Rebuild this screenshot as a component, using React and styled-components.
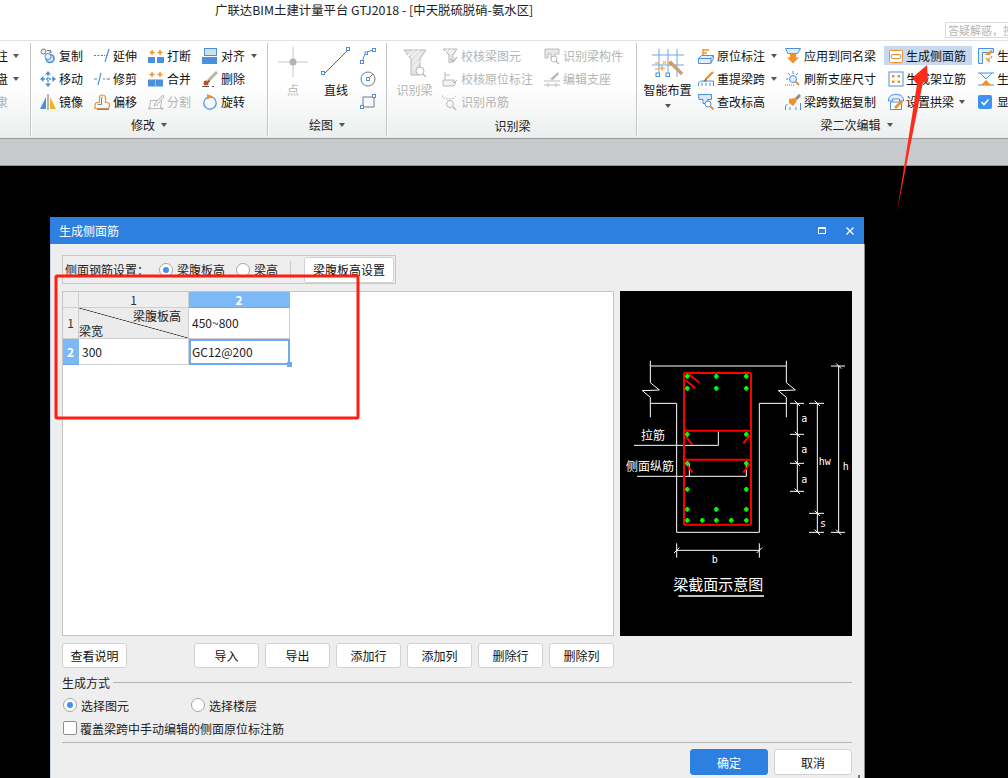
import React from 'react';
import styled, { createGlobalStyle } from 'styled-components';

const BLUE = '#4a90dc';
const ORANGE = '#f0912a';
const GREY = '#b9b9b9';
const DARK = '#6f7b85';

const GlobalStyle = createGlobalStyle`
  html, body {
    margin: 0;
    padding: 0;
    background: #000;
  }
  body {
    font-family: "Noto Sans CJK SC", "Noto Sans", sans-serif;
    font-size: 12px;
    color: #000;
  }
`;

const Page = styled.div`
  width: 1008px;
  height: 778px;
  position: relative;
  overflow: hidden;
  display: flex;
  flex-direction: column;
`;

const TitleBar = styled.div`
  height: 40px;
  flex: none;
  background: #fff;
  border-bottom: 1px solid #e2e2e2;
  display: flex;
  padding-left: 215px;
`;

const TitleText = styled.div`
  font-size: 12.4px;
  line-height: 20px;
  color: #222;
  white-space: nowrap;
`;

const SearchBox = styled.div`
  margin-left: auto;
  margin-top: 22px;
  width: 63px;
  height: 16px;
  box-sizing: border-box;
  border: 1px solid #dcdcdc;
  border-right: 0;
  font-size: 11px;
  line-height: 14px;
  color: #b4b4b4;
  padding-left: 2px;
  overflow: hidden;
  white-space: nowrap;
`;

const Ribbon = styled.div`
  height: 97px;
  flex: none;
  display: flex;
  background: linear-gradient(to bottom, #fff 0%, #fff 45%, #eceeee 100%);
  border-bottom: 1px solid #9a9c9d;
  overflow: hidden;
`;

const Group = styled.div`
  flex: none;
  width: ${(p) => p.$width}px;
  box-sizing: border-box;
  display: flex;
  flex-direction: column;
  margin: 2px 0;
  border-right: ${(p) => (p.$last ? '0' : '1px solid #c3c5c6')};
  box-shadow: ${(p) => (p.$last ? 'none' : '1px 0 0 #fff')};
  overflow: hidden;
`;

const GroupBody = styled.div`
  display: flex;
  justify-content: ${(p) => (p.$end ? 'flex-end' : 'flex-start')};
  padding-top: 1px;
  padding-left: ${(p) => p.$pad || 0}px;
`;

const GroupLabel = styled.div`
  margin-top: auto;
  margin-bottom: ${(p) => p.$bottom ?? 3}px;
  height: 16px;
  line-height: 16px;
  display: flex;
  justify-content: center;
  align-items: center;
  gap: 6px;
  color: #222;
  padding-left: ${(p) => p.$shift || 0}px;
  white-space: nowrap;
`;

const Column = styled.div`
  flex: none;
  width: ${(p) => (p.$width ? `${p.$width}px` : 'auto')};
  display: flex;
  flex-direction: column;
  margin-left: ${(p) => p.$left || 0}px;
`;

const Tool = styled.div`
  height: 19px;
  margin: 2px 0;
  display: flex;
  align-items: center;
  gap: ${(p) => p.$gap ?? 3}px;
  padding-left: ${(p) => p.$inset || 0}px;
  margin-right: ${(p) => p.$trim || 0}px;
  white-space: nowrap;
  color: ${(p) => (p.$off ? '#b4b4b4' : '#111')};
  background: ${(p) => (p.$active ? '#c7d9f1' : 'transparent')};
`;

const BigTool = styled.div`
  flex: none;
  width: ${(p) => p.$width}px;
  display: flex;
  flex-direction: column;
  align-items: center;
  color: ${(p) => (p.$off ? '#b4b4b4' : '#111')};
  white-space: nowrap;
`;

const BigIcon = styled.div`
  height: 38px;
  padding-top: ${(p) => p.$top ?? 3}px;
  box-sizing: border-box;
  display: flex;
  align-items: flex-start;
  justify-content: center;
`;

const BigText = styled.div`
  line-height: 16px;
  height: 16px;
`;

const Caret = styled.span`
  display: inline-block;
  flex: none;
  width: 0;
  height: 0;
  border-left: 3.5px solid transparent;
  border-right: 3.5px solid transparent;
  border-top: 4px solid #555;
  margin-left: ${(p) => p.$left || 0}px;
`;

const BigCaret = styled(Caret)`
  margin-top: 6px;
`;

const CaretSpacer = styled.span`
  flex: none;
  width: 7px;
  margin-left: ${(p) => p.$left || 0}px;
`;

const StatusStrip = styled.div`
  height: 26px;
  flex: none;
  background: #c8cbcd;
  border-bottom: 1px solid #95989a;
`;

const Canvas = styled.div`
  flex: 1;
  min-height: 0;
  background: #000;
  padding: 51px 0 0 50px;
`;

const Dialog = styled.div`
  width: 814px;
  height: 561px;
  box-sizing: border-box;
  background: #eee;
  display: flex;
  flex-direction: column;
  position: relative;
`;

const DialogHead = styled.div`
  height: 27px;
  flex: none;
  background: #2d7fe0;
  color: #fff;
  line-height: 27px;
  padding: 0 9px;
  display: flex;
  align-items: center;
  justify-content: space-between;
`;

const HeadIcons = styled.div`
  display: flex;
  align-items: center;
  gap: 20px;
  padding-right: 1px;
`;

const DialogBody = styled.div`
  flex: 1;
  padding: 11px 12px 0 11px;
  border-left: 1px solid #c6d0e8;
  box-shadow: 1px 0 0 #8d8d8d;
  display: flex;
  flex-direction: column;
`;

const SettingsBar = styled.div`
  width: 334px;
  height: 29px;
  box-sizing: border-box;
  border: 1px solid #c8c8c8;
  display: flex;
  align-items: center;
  padding-left: 2px;
  margin-bottom: 7px;
  white-space: nowrap;
`;

const BarCaption = styled.span`
  width: 94px;
  flex: none;
  color: #222;
`;

const Choice = styled.label`
  display: flex;
  align-items: center;
  gap: 4px;
  width: ${(p) => (p.$width ? `${p.$width}px` : 'auto')};
  flex: none;
  color: #222;
  white-space: nowrap;
`;

const Radio = styled.span`
  width: 14px;
  height: 14px;
  box-sizing: border-box;
  border-radius: 50%;
  border: 1px solid #a5a5a5;
  background: #fff;
  flex: none;
  display: flex;
  align-items: center;
  justify-content: center;
  &::after {
    content: '';
    display: ${(p) => (p.$on ? 'block' : 'none')};
    width: 6px;
    height: 6px;
    border-radius: 50%;
    background: #3f92f2;
  }
`;

const CheckBox = styled.span`
  width: 14px;
  height: 14px;
  box-sizing: border-box;
  border-radius: 2px;
  border: 1px solid #8f8f8f;
  background: #fff;
  flex: none;
  margin-right: -1px;
`;

const BarSeparator = styled.span`
  width: 1px;
  height: 18px;
  background: #c8c8c8;
  margin: 0 13px 0 12px;
  flex: none;
`;

const BaseButton = styled.button`
  font: inherit;
  padding: 0;
  box-sizing: border-box;
  border: 1px solid #d2d2d2;
  border-radius: 3px;
  background: #fff;
  color: #111;
  flex: none;
  width: ${(p) => p.$width || 65}px;
  height: ${(p) => p.$height || 25}px;
`;

const PrimaryButton = styled(BaseButton)`
  background: #2d7fe0;
  border-color: #2d7fe0;
  color: #fff;
`;

const MainRow = styled.div`
  display: flex;
  gap: 6px;
  height: 345px;
  flex: none;
`;

const GridPanel = styled.div`
  width: 552px;
  box-sizing: border-box;
  background: #fff;
  border: 1px solid #c4c4c4;
`;

const Sheet = styled.table`
  border-collapse: separate;
  border-spacing: 0;
  table-layout: fixed;
  width: 227px;
`;

const SheetCol = styled.col`
  width: ${(p) => p.$width}px;
`;

const HeadCell = styled.th`
  box-sizing: border-box;
  height: ${(p) => p.$height || 16}px;
  padding: 0;
  font-weight: ${(p) => (p.$on ? 700 : 400)};
  line-height: 14px;
  font-size: 12px;
  color: ${(p) => (p.$on ? '#fff' : '#333')};
  background: ${(p) => (p.$on ? '#7db8f7' : '#eee')};
  border-right: 1px solid ${(p) => (p.$on ? '#7db8f7' : '#cfcfcf')};
  border-bottom: 1px solid ${(p) => (p.$on ? '#6aa8ee' : '#cfcfcf')};
`;

const Cell = styled.td`
  box-sizing: border-box;
  height: ${(p) => p.$height}px;
  padding: 0 0 1px 3px;
  color: #222;
  border-right: 1px solid #cfcfcf;
  border-bottom: 1px solid #cfcfcf;
  position: relative;
  outline: ${(p) => (p.$selected ? '2px solid #6faaf0' : 'none')};
  outline-offset: -2px;
`;

const CornerCell = styled.td`
  box-sizing: border-box;
  height: 31px;
  padding: 0;
  border-right: 1px solid #cfcfcf;
  border-bottom: 1px solid #cfcfcf;
  background:
    linear-gradient(to top right, transparent calc(50% - 0.7px), #333 50%, transparent calc(50% + 0.7px)),
    #ebebeb;
`;

const CornerInner = styled.div`
  height: 30px;
  display: flex;
  flex-direction: column;
  justify-content: space-between;
  line-height: 15px;
  color: #222;
`;

const CornerTop = styled.span`
  align-self: flex-end;
  padding-right: 7px;
`;

const DragHandle = styled.span`
  position: absolute;
  right: -3px;
  bottom: -3px;
  width: 5px;
  height: 5px;
  background: #6faaf0;
`;

const Preview = styled.div`
  width: 232px;
  background: #000;
`;

const ButtonRow = styled.div`
  display: flex;
  gap: 6px;
  margin-top: 7px;
  flex: none;
`;

const HelpButton = styled(BaseButton)`
  margin-right: 61px;
`;

const Legend = styled.div`
  display: flex;
  align-items: center;
  gap: 3px;
  height: 16px;
  margin-top: 6px;
  color: #222;
`;

const Rule = styled.div`
  flex: 1;
  height: 1px;
  background: #b4b4b4;
`;

const OptionRow = styled.div`
  display: flex;
  height: 18px;
  margin-top: ${(p) => p.$top}px;
  padding-left: 1px;
  align-items: center;
`;

const FooterRule = styled.div`
  height: 1px;
  background: #b4b4b4;
  margin-top: 5px;
`;

const Footer = styled.div`
  display: flex;
  justify-content: flex-end;
  gap: 6px;
  margin-top: 6px;
`;

const ResizeGrip = styled.span`
  position: absolute;
  right: 4px;
  bottom: 0;
  width: 2px;
  height: 3px;
  background: #777;
`;

const Overlay = styled.svg`
  position: absolute;
  left: 0;
  top: 0;
  pointer-events: none;
`;

const Ico = ({ w = 16, h = 16, children }) => (
  <svg width={w} height={h} viewBox={`0 0 ${w} ${h}`} fill="none" style={{ flex: 'none' }}>
    {children}
  </svg>
);

const icons = {
  copy: (
    <Ico>
      <circle cx="3.5" cy="3.5" r="2.5" stroke={DARK} fill="#eee" />
      <path d="M7 2.5h3.5v2M9 3.5l1.5 1.5L12 3.5" stroke={DARK} />
      <circle cx="10" cy="10.5" r="4" stroke={BLUE} strokeWidth="1.6" fill="#cfe3f8" />
      <circle cx="8" cy="8.5" r="3" stroke={BLUE} fill="#e9f2fb" />
    </Ico>
  ),
  extend: (
    <Ico>
      <path d="M0 7.5h2M3.5 7.5h2M7 7.5h2" stroke={DARK} />
      <path d="M15 1l-4 13" stroke={BLUE} strokeWidth="1.2" />
      <path d="M10 7.5h3" stroke={DARK} strokeDasharray="1 1" />
    </Ico>
  ),
  breakIt: (
    <Ico>
      <path d="M4 2v5M1.5 4.5h5M12 2v5M9.5 4.5h5" stroke={ORANGE} strokeWidth="1.4" />
      <rect x="0" y="9" width="7" height="6" fill={BLUE} />
      <rect x="9" y="9" width="7" height="6" fill={BLUE} />
    </Ico>
  ),
  align: (
    <Ico>
      <rect x="2.5" y="0.5" width="12" height="7" fill="#cfe0f5" stroke={BLUE} />
      <rect x="0" y="9" width="15" height="7" fill={BLUE} />
    </Ico>
  ),
  move: (
    <Ico>
      <path d="M8 0l3 3.5H5zM8 16l-3-3.5h6zM0 8l3.5-3v6zM16 8l-3.5 3V5z" fill={BLUE} />
      <path d="M8 3v10M3 8h10" stroke={BLUE} strokeWidth="1.4" strokeDasharray="2 1" />
    </Ico>
  ),
  trim: (
    <Ico>
      <path d="M0 8h3M9 8h2M12.5 8h3.5" stroke={DARK} />
      <path d="M7 2L4 14" stroke={BLUE} strokeWidth="1.2" />
    </Ico>
  ),
  merge: (
    <Ico>
      <path d="M4 1v5M1.5 3.5h5M12 1v5M9.5 3.5h5" stroke={ORANGE} strokeWidth="1.4" />
      <rect x="0" y="8.5" width="15" height="7" fill={BLUE} />
      <path d="M7.5 8.5v7" stroke="#9cc4ee" />
    </Ico>
  ),
  remove: (
    <Ico>
      <path d="M15 1L6 10" stroke="#b9b2a6" strokeWidth="3" />
      <path d="M7 9l-4 3.5 1 1 4-3z" fill="#a5481d" />
      <circle cx="4" cy="12" r="2.5" fill="#b8501d" />
      <path d="M0 15.5h7M10 15.5h2" stroke="#555" />
    </Ico>
  ),
  mirror: (
    <Ico>
      <path d="M6 3L0 15h6z" fill={BLUE} />
      <path d="M10 3l6 12h-6z" fill="#f6b21b" />
      <path d="M8 0v16" stroke={DARK} />
    </Ico>
  ),
  offset: (
    <Ico>
      <path d="M1 14.5v-3c0-2 1-3 3-3h1.5V4c0-2 1-3 3-3s3 1 3 3v4.5H13c2 0 2.5 1 2.5 2.5s-.5 3.500-2 3.500z" stroke={ORANGE} strokeWidth="1.2" />
      <path d="M3 15.500h12" stroke={BLUE} strokeWidth="1.500" />
      <path d="M3.500 11c0-.5 .5-.5 1-.5h3V4c0-.5 .5-.5 1-.5" stroke={BLUE} />
    </Ico>
  ),
  split: (
    <Ico>
      <path d="M0.500 14.500h15M2.500 6.500h11l-1 8h-11z" stroke={GREY} />
      <path d="M15 1L7 9l-1 3 3-1 7-8z" stroke={GREY} fill="#eee" />
      <path d="M1 16v-3M14 16v-3" stroke={GREY} />
    </Ico>
  ),
  rotate: (
    <Ico>
      <circle cx="8" cy="9" r="6.200" stroke={BLUE} strokeWidth="1.200" />
      <path d="M5 0l6 2.500L5 5.500z" fill={ORANGE} />
    </Ico>
  ),
  arc: (
    <Ico>
      <path d="M3 13C3 7 7 2.500 13 2.500" stroke={DARK} />
      <rect x="0.500" y="12.500" width="3" height="3" fill="#fff" stroke={BLUE} />
      <rect x="5" y="4" width="2.500" height="2.500" fill="#fff" stroke={BLUE} />
      <rect x="12.500" y="0.500" width="3" height="3" fill="#fff" stroke={BLUE} />
    </Ico>
  ),
  circle: (
    <Ico>
      <circle cx="8" cy="8" r="7" stroke={DARK} />
      <path d="M8 8l5-5" stroke={DARK} />
      <rect x="6.500" y="6.500" width="3" height="3" fill="#fff" stroke={BLUE} />
    </Ico>
  ),
  rect: (
    <Ico>
      <path d="M3 3h11v10H3z" stroke={DARK} />
      <rect x="0.500" y="11.500" width="3" height="3" fill="#fff" stroke={BLUE} />
      <rect x="12.500" y="0.500" width="3" height="3" fill="#fff" stroke={BLUE} />
    </Ico>
  ),
  checkBeam: (
    <Ico>
      <path d="M1 1h14l-4 6v6l-4 2V7z" stroke={GREY} fill="#e7e7e7" />
      <path d="M3 4l3-3M6 5l4-4M8 6l4-4" stroke="#fff" />
      <path d="M9 11l2 3 4-5" stroke={GREY} strokeWidth="1.300" />
    </Ico>
  ),
  checkMark: (
    <Ico>
      <path d="M3 1v8M3 4h5M1 9h11l2 3-2 3H1z" stroke={GREY} fill="#f2f2f2" />
      <path d="M10 10l2 2 3-3" stroke={GREY} />
    </Ico>
  ),
  findHang: (
    <Ico>
      <path d="M0 1c0 3 4 4 7 4s7-1 7-4" stroke={GREY} strokeDasharray="2 1" />
      <circle cx="8" cy="10" r="3.500" stroke={GREY} />
      <path d="M11 13l3 3" stroke={GREY} strokeWidth="1.500" />
    </Ico>
  ),
  findPart: (
    <Ico>
      <path d="M1 1h14v5h-4v5H7V6H4v4H1z" stroke={GREY} fill="#e7e7e7" />
      <circle cx="10" cy="11" r="3" stroke={GREY} fill="#fff" />
      <path d="M12 13l3 3" stroke={GREY} strokeWidth="1.500" />
    </Ico>
  ),
  editSupport: (
    <Ico>
      <path d="M0 10h16M0 14h16" stroke={GREY} />
      <path d="M4 12v4M12 12v4" stroke={GREY} />
      <path d="M14 1L6 8l3 1 6-6z" fill={GREY} />
    </Ico>
  ),
  inPlace: (
    <Ico>
      <path d="M5 1v7M5 2h6M5 5h4" stroke={ORANGE} strokeWidth="1.300" />
      <path d="M0.500 10.500l3-3h12v3l-3 5h-12z" stroke={BLUE} fill="#e2eefb" />
      <path d="M0.500 10.500h12.500v5M13 10.500l3-3" stroke={BLUE} />
    </Ico>
  ),
  reSpan: (
    <Ico>
      <path d="M15 1L8 8" stroke={ORANGE} strokeWidth="2.400" />
      <path d="M8 7l-3 4 4-1z" fill="#b8501d" />
      <path d="M0.500 15v-3l2-2h13v5M4 11.500V15M8 11.500V15M12 11.500V15" stroke={BLUE} />
    </Ico>
  ),
  changeHeight: (
    <Ico>
      <path d="M0.500 0.500h13v5h-4v4H5v-4h-4z" stroke={BLUE} fill="#d9e8f9" />
      <circle cx="10" cy="10" r="3" stroke={BLUE} fill="#fff" />
      <path d="M12 12l3.500 3.500" stroke={ORANGE} strokeWidth="2" />
    </Ico>
  ),
  applySame: (
    <Ico>
      <path d="M0.500 0.500h15l-3 5H3z" stroke={BLUE} fill="#e2eefb" />
      <path d="M5 5.500h6v4h3l-6 6-6-6h3z" fill={ORANGE} />
    </Ico>
  ),
  refresh: (
    <Ico>
      <path d="M8 0v3M3 2l2 2M13 2l-2 2M1 8h2" stroke={BLUE} />
      <circle cx="8" cy="8" r="3.500" stroke={BLUE} fill="#e2eefb" />
      <path d="M10.500 10.500l3.500 3.500" stroke={ORANGE} strokeWidth="2" />
      <path d="M0 14h9" stroke={DARK} strokeDasharray="1 1" />
    </Ico>
  ),
  spanCopy: (
    <Ico>
      <path d="M15 1l-4 4" stroke="#8a8a8a" strokeWidth="3" />
      <path d="M4 5l6-1 2 3-4 5-4-3z" fill={ORANGE} />
      <path d="M0.500 16v-4l2-2M15.500 16V9M5 16v-3M11 16v-3" stroke={BLUE} />
    </Ico>
  ),
  sideBar: (
    <Ico>
      <rect x="1.500" y="2.500" width="13" height="12" rx="1" stroke={ORANGE} fill="#fff" />
      <path d="M4 6.500h8M4 10.500h8" stroke={ORANGE} />
      <path d="M4 6.500c-1 1-1 3 0 4M12 6.500c1 1 1 3 0 4" stroke="#3b87d8" />
    </Ico>
  ),
  erect: (
    <Ico>
      <rect x="1" y="1" width="14" height="14" stroke={BLUE} fill="#fff" />
      <path d="M4 4h2.500v2.500H4zM9.500 4H12v2.500H9.500zM4 9.500h2.500V12H4zM9.500 9.500H12V12H9.500z" fill={ORANGE} />
    </Ico>
  ),
  arch: (
    <Ico>
      <path d="M0.500 6C0.500 2 4 0.500 8 0.500S15.500 2 15.500 6v1h-4V5h-7v2h-4z" stroke={BLUE} fill="#e2eefb" />
      <path d="M2.500 8h11v7.500h-11z" stroke={BLUE} fill="#fff" />
      <path d="M6 13l7-7 2 2-7 7z" fill={ORANGE} />
    </Ico>
  ),
  flange: (
    <Ico>
      <path d="M0.500 0.500h15v4h-11v11h-4z" stroke={BLUE} fill="#e2eefb" />
      <path d="M15 1L6 7h6z" fill={ORANGE} />
      <path d="M8 10l4 4M12 10l-3 3M14 8l-1 2" stroke={ORANGE} strokeWidth="1.300" />
    </Ico>
  ),
  hourglass: (
    <Ico>
      <path d="M0 2h16M0 14h16" stroke={BLUE} />
      <path d="M2 2l6 6 6-6" stroke={BLUE} />
      <path d="M3 14l5-5 5 5z" fill={ORANGE} />
    </Ico>
  ),
  checked: (
    <Ico>
      <rect x="0" y="1" width="14" height="14" rx="2" fill="#3f92f2" />
      <path d="M3.500 8l2.500 2.500 4.500-5" stroke="#fff" strokeWidth="1.600" />
    </Ico>
  ),
};

const BigPoint = () => (
  <Ico w={30} h={30}>
    <path d="M15 0v30M0 15h30" stroke="#c6c6c6" />
    <circle cx="15" cy="15" r="3.500" fill="#b4b4b4" />
  </Ico>
);

const BigLine = () => (
  <Ico w={30} h={30}>
    <path d="M3 27L27 3" stroke="#666" />
    <rect x="0.500" y="24.500" width="3" height="3" fill="#fff" stroke={BLUE} />
    <rect x="25.500" y="0.500" width="3" height="3" fill="#fff" stroke={BLUE} />
  </Ico>
);

const BigBeam = () => (
  <Ico w={24} h={28}>
    <path d="M1 1h22l-6 9v16H8V10z" stroke={GREY} fill="#e4e4e4" />
    <path d="M4 8l7-7M8 9l8-8M10 13l8-9M9 20l8-8" stroke="#fff" />
    <circle cx="17" cy="22" r="4" stroke={GREY} fill="#fff" />
    <path d="M20 25l3 3" stroke={GREY} strokeWidth="1.500" />
  </Ico>
);

const BigLayout = () => (
  <Ico w={32} h={28}>
    <path d="M0 6h32M0 16h32M7 0v28M16 0v28M25 0v28" stroke="#6ea6e4" />
    <path d="M3 14h4M3 20h4" stroke={ORANGE} />
    <path d="M11 12l3 3M14 12l-3 3M7 19h6M10 16v6" stroke={ORANGE} />
    <path d="M18 13l12 12" stroke="#c9a27a" strokeWidth="3.500" />
    <path d="M18 12l3 3-2 2-3-3z" fill={ORANGE} />
    <rect x="4" y="24" width="3.500" height="3.500" fill="#fff" stroke={BLUE} />
    <rect x="14" y="24" width="3.500" height="3.500" fill="#fff" stroke={BLUE} />
  </Ico>
);

const modifyColumns = [
  [['copy', '复制'], ['move', '移动'], ['mirror', '镜像']],
  [['extend', '延伸'], ['trim', '修剪'], ['offset', '偏移']],
  [['breakIt', '打断'], ['merge', '合并'], ['split', '分割', true]],
  [['align', '对齐', false, true], ['remove', '删除'], ['rotate', '旋转']],
];

const ToolItem = ({ icon, label, off, caret, gap, active, inset, trim }) => (
  <Tool $off={off} $gap={gap} $active={active} $inset={inset} $trim={trim}>
    {icons[icon]}
    <span>{label}</span>
    {caret && <Caret $left={3} />}
  </Tool>
);

const RibbonBar = () => (
  <Ribbon>
    <Group $width={31}>
      <GroupBody $end>
        <Column>
          <Tool>
            <span>标注</span>
            <Caret $left={2} />
            <CaretSpacer />
          </Tool>
          <Tool>
            <span>构盘</span>
            <Caret $left={2} />
            <CaretSpacer />
          </Tool>
          <Tool $off>
            <span>楼隶</span>
            <CaretSpacer $left={2} />
            <CaretSpacer />
          </Tool>
        </Column>
      </GroupBody>
    </Group>

    <Group $width={237}>
      <GroupBody $pad={9}>
        {modifyColumns.map((tools, i) => (
          <Column key={i} $width={54}>
            {tools.map(([icon, label, off, caret]) => (
              <ToolItem key={label} icon={icon} label={label} off={off} caret={caret} />
            ))}
          </Column>
        ))}
      </GroupBody>
      <GroupLabel>
        修改 <Caret />
      </GroupLabel>
    </Group>

    <Group $width={119}>
      <GroupBody>
        <BigTool $width={50} $off>
          <BigIcon>
            <BigPoint />
          </BigIcon>
          <BigText>点</BigText>
        </BigTool>
        <BigTool $width={36}>
          <BigIcon>
            <BigLine />
          </BigIcon>
          <BigText>直线</BigText>
        </BigTool>
        <Column $left={6}>
          <Tool>{icons.arc}</Tool>
          <Tool>{icons.circle}</Tool>
          <Tool>{icons.rect}</Tool>
        </Column>
      </GroupBody>
      <GroupLabel>
        绘图 <Caret />
      </GroupLabel>
    </Group>

    <Group $width={250}>
      <GroupBody>
        <BigTool $width={55} $off>
          <BigIcon $top={5}>
            <BigBeam />
          </BigIcon>
          <BigText>识别梁</BigText>
        </BigTool>
        <Column $width={102}>
          <ToolItem icon="checkBeam" label="校核梁图元" off />
          <ToolItem icon="checkMark" label="校核原位标注" off />
          <ToolItem icon="findHang" label="识别吊筋" off />
        </Column>
        <Column>
          <ToolItem icon="findPart" label="识别梁构件" off />
          <ToolItem icon="editSupport" label="编辑支座" off />
        </Column>
      </GroupBody>
      <GroupLabel $shift={2} $bottom={2}>
        识别梁
      </GroupLabel>
    </Group>

    <Group $width={371} $last>
      <GroupBody>
        <BigTool $width={61}>
          <BigIcon $top={5}>
            <BigLayout />
          </BigIcon>
          <BigText>智能布置</BigText>
          <BigCaret />
        </BigTool>
        <Column $width={87}>
          <ToolItem icon="inPlace" label="原位标注" caret />
          <ToolItem icon="reSpan" label="重提梁跨" caret />
          <ToolItem icon="changeHeight" label="查改标高" />
        </Column>
        <Column $width={99}>
          <ToolItem icon="applySame" label="应用到同名梁" />
          <ToolItem icon="refresh" label="刷新支座尺寸" />
          <ToolItem icon="spanCopy" label="梁跨数据复制" />
        </Column>
        <Column $width={94}>
          <ToolItem icon="sideBar" label="生成侧面筋" gap={2} inset={4} trim={6} active />
          <ToolItem icon="erect" label="生成架立筋" gap={2} inset={4} />
          <ToolItem icon="arch" label="设置拱梁" gap={2} inset={4} caret />
        </Column>
        <Column>
          <ToolItem icon="flange" label="生成" />
          <ToolItem icon="hourglass" label="生成" />
          <ToolItem icon="checked" label="显示" />
        </Column>
      </GroupBody>
      <GroupLabel $shift={68}>
        梁二次编辑 <Caret />
      </GroupLabel>
    </Group>
  </Ribbon>
);

const SectionDrawing = () => {
  const dots = [
    [217, 109], [304, 109], [394, 109], [217, 145], [304, 145], [394, 145], [217, 283], [394, 283],
    [217, 370], [394, 370], [217, 448], [394, 448], [217, 508], [304, 508], [394, 508], [217, 541],
    [262, 541], [304, 541], [349, 541], [394, 541],
  ];
  const ticks = [
    [547, 190, 525, 567], [547, 283, 525, 567], [547, 370, 525, 567], [547, 454, 525, 567],
    [607, 190, 582, 627], [607, 520, 582, 627], [607, 577, 582, 627],
    [671, 78, 648, 690], [671, 577, 648, 690],
  ];
  const hooks = 'M222 103l31 25M211 120l30 25M213 290l19 24M405 285l-20 25M215 372l17 26M404 372l-19 26';
  return (
    <svg width="232" height="345" viewBox="15 -147 696 1035" fill="none" style={{ display: 'block' }}>
      <g stroke="#fff" strokeWidth="3">
        <path d="M106 62v66l27 22-51 2 24 20v60M106 78h408M514 62v66l27 22-51 2 24 20v60" />
        <path d="M106 190h79v387h248V190h81" />
        <path d="M57 316h253v-44M66 409h328v-39M223 409v-39" />
        <path d="M547 190v264M607 190v387M671 78v499M185 631h248M185 610v43M433 610v43" />
        {ticks.map(([x, y, a, b]) => (
          <g key={`${x}-${y}`}>
            <path d={`M${a} ${y}H${b}`} />
            <path d={`M${x - 8} ${y - 8}l16 16`} />
          </g>
        ))}
        <path d="M177 639l16-16M425 639l16-16" />
      </g>
      <rect x="207" y="99" width="201" height="455" rx="3" stroke="#f00" strokeWidth="6" />
      <path d="M207 272h201M207 359h201" stroke="#f00" strokeWidth="6" />
      <path d={hooks} stroke="#f00" strokeWidth="6" />
      {dots.map(([x, y]) => (
        <path key={`${x}-${y}`} d={`M${x - 7} ${y}h14M${x} ${y - 7}v14`} stroke="#0f0" strokeWidth="7" />
      ))}
      <g fill="#fff" fontSize="36" fontFamily="'Noto Sans CJK SC', sans-serif">
        <text x="78" y="300">拉筋</text>
        <text x="33" y="394">侧面纵筋</text>
      </g>
      <g fill="#fff" fontSize="30" fontFamily="'DejaVu Sans Mono', monospace">
        <text x="559" y="247">a</text>
        <text x="559" y="340">a</text>
        <text x="559" y="428">a</text>
        <text x="611" y="375">hw</text>
        <text x="615" y="560">s</text>
        <text x="683" y="390">h</text>
        <text x="290" y="670">b</text>
      </g>
      <text x="175" y="749" fill="#fff" fontSize="45" fontFamily="'Noto Sans CJK SC', sans-serif">梁截面示意图</text>
      <path d="M190 768h257" stroke="#fff" strokeWidth="5" />
    </svg>
  );
};

const ParamSheet = () => (
  <Sheet>
    <colgroup>
      <SheetCol $width={16} />
      <SheetCol $width={110} />
      <SheetCol $width={101} />
    </colgroup>
    <thead>
      <tr>
        <HeadCell />
        <HeadCell>1</HeadCell>
        <HeadCell $on>2</HeadCell>
      </tr>
    </thead>
    <tbody>
      <tr>
        <HeadCell $height={31}>1</HeadCell>
        <CornerCell>
          <CornerInner>
            <CornerTop>梁腹板高</CornerTop>
            <span>梁宽</span>
          </CornerInner>
        </CornerCell>
        <Cell $height={31}>450~800</Cell>
      </tr>
      <tr>
        <HeadCell $on $height={26}>
          2
        </HeadCell>
        <Cell $height={26}>300</Cell>
        <Cell $height={26} $selected>
          GC12@200
          <DragHandle />
        </Cell>
      </tr>
    </tbody>
  </Sheet>
);

const SideRebarDialog = () => (
  <Dialog>
    <DialogHead>
      <span>生成侧面筋</span>
      <HeadIcons>
        <svg width="8" height="7" viewBox="0 0 8 7" fill="none">
          <path d="M0.500 0.500h7v6h-7z M0.500 1.500h7" stroke="#fff" />
        </svg>
        <svg width="8" height="8" viewBox="0 0 8 8" fill="none">
          <path d="M0.500 0.500l7 7M7.500 0.500l-7 7" stroke="#fff" strokeWidth="1.300" />
        </svg>
      </HeadIcons>
    </DialogHead>
    <DialogBody>
      <SettingsBar>
        <BarCaption>侧面钢筋设置：</BarCaption>
        <Choice $width={77}>
          <Radio $on />
          梁腹板高
        </Choice>
        <Choice>
          <Radio />
          梁高
        </Choice>
        <BarSeparator />
        <BaseButton $width={90} $height={26}>
          梁腹板高设置
        </BaseButton>
      </SettingsBar>
      <MainRow>
        <GridPanel>
          <ParamSheet />
        </GridPanel>
        <Preview>
          <SectionDrawing />
        </Preview>
      </MainRow>
      <ButtonRow>
        <HelpButton>查看说明</HelpButton>
        <BaseButton>导入</BaseButton>
        <BaseButton>导出</BaseButton>
        <BaseButton>添加行</BaseButton>
        <BaseButton>添加列</BaseButton>
        <BaseButton>删除行</BaseButton>
        <BaseButton>删除列</BaseButton>
      </ButtonRow>
      <Legend>
        生成方式
        <Rule />
      </Legend>
      <OptionRow $top={6}>
        <Choice $width={128}>
          <Radio $on />
          选择图元
        </Choice>
        <Choice>
          <Radio />
          选择楼层
        </Choice>
      </OptionRow>
      <OptionRow $top={5}>
        <Choice>
          <CheckBox />
          覆盖梁跨中手动编辑的侧面原位标注筋
        </Choice>
      </OptionRow>
      <FooterRule />
      <Footer>
        <PrimaryButton $width={78} $height={26}>
          确定
        </PrimaryButton>
        <BaseButton $width={78} $height={26}>
          取消
        </BaseButton>
      </Footer>
    </DialogBody>
    <ResizeGrip />
  </Dialog>
);

export default function App() {
  return (
    <Page>
      <GlobalStyle />
      <TitleBar>
        <TitleText>广联达BIM土建计量平台 GTJ2018 - [中天脱硫脱硝-氨水区]</TitleText>
        <SearchBox>答疑解惑，搜索</SearchBox>
      </TitleBar>
      <RibbonBar />
      <StatusStrip />
      <Canvas>
        <SideRebarDialog />
      </Canvas>
      {/* red annotations drawn over the screenshot */}
      <Overlay width="1008" height="778" viewBox="0 0 1008 778" fill="none">
        <rect x="56" y="276" width="302" height="142" stroke="#ff1e12" strokeWidth="3" rx="1" />
        <path d="M927 65L928 82L923 82L897 212L917 84L912 78Z" fill="#ff2a1a" />
      </Overlay>
    </Page>
  );
}
